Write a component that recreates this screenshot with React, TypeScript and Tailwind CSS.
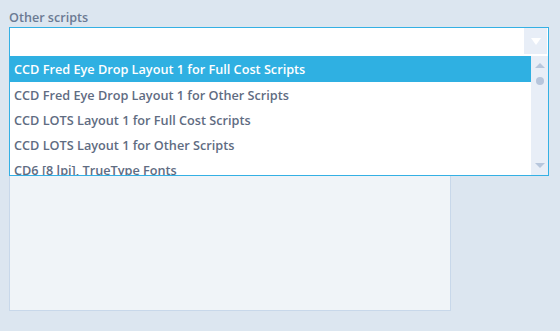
import React from 'react';

const items = [
  'CCD Fred Eye Drop Layout 1 for Full Cost Scripts',
  'CCD Fred Eye Drop Layout 1 for Other Scripts',
  'CCD LOTS Layout 1 for Full Cost Scripts',
  'CCD LOTS Layout 1 for Other Scripts',
  'CD6 [8 lpi], TrueType Fonts',
];

export default function App() {
  return (
    <div
      className="h-[331px] w-[560px] bg-[#dce6f0] px-[9px] pt-[8px]"
      style={{ fontFamily: '"Open Sans", "Noto Sans", sans-serif' }}
    >
      <div className="text-[12.6px] font-semibold leading-[19px] text-[#6b7a93]">Other scripts</div>
      <div className="relative w-[540px]">
        {/* select box */}
        <div className="flex h-[29px] border-x border-t border-[#34b0e4] bg-white pr-px">
          <div className="flex-1" />
          <div className="flex h-[26px] w-[23px] items-center justify-center bg-[#e8eef7]">
            <svg width="10" height="7" viewBox="0 0 10 7">
              <path d="M0 0h10L5 7z" fill="#fff" />
            </svg>
          </div>
        </div>

        {/* panel behind the open list */}
        <div className="h-[255px] w-[442px] border border-[#c8d8ea] bg-[#f0f4f8]" />

        {/* open list */}
        <div className="absolute left-0 top-[29px] flex h-[120px] w-[540px] border-x border-b border-[#34b0e4] bg-white">
          <div className="flex-1 overflow-hidden">
            {items.map((item, i) => (
              <div
                key={item}
                className={
                  i === 0
                    ? 'h-[26px] whitespace-nowrap bg-[#2fb0e2] pl-[4px] pt-px text-[12.7px] font-semibold leading-[25px] text-white'
                    : 'h-[25px] whitespace-nowrap pl-[4px] pt-px text-[12.7px] font-semibold leading-[24px] text-[#5f6c82]'
                }
              >
                {item}
              </div>
            ))}
          </div>
          <div className="flex w-[17px] flex-col items-center bg-[#e8eef7] pt-[7px]">
            <svg width="10" height="5" viewBox="0 0 10 5">
              <path d="M5 0l5 5H0z" fill="#b7c6dc" />
            </svg>
            <div className="mt-[9px] h-[8px] w-[8px] rounded-full bg-[#b7c6dc]" />
            <div className="flex-1" />
            <svg className="mb-[7px]" width="10" height="5" viewBox="0 0 10 5">
              <path d="M0 0h10L5 5z" fill="#b7c6dc" />
            </svg>
          </div>
        </div>
      </div>
    </div>
  );
}
